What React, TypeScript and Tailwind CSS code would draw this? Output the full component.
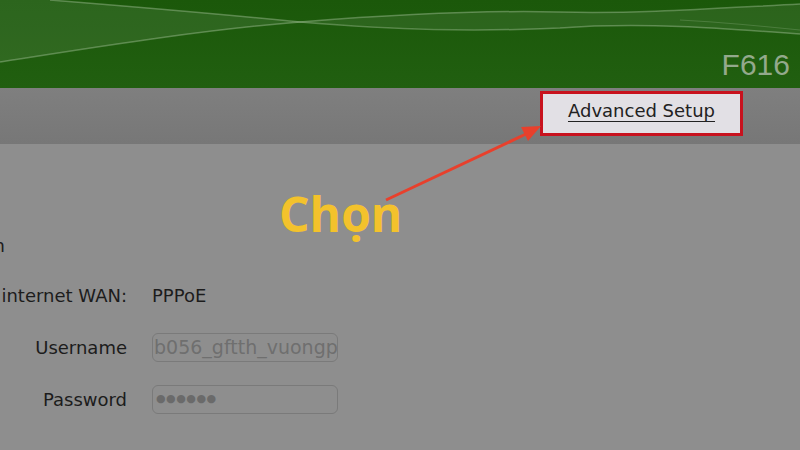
import React from 'react';

const Waves = () => (
  <svg className="absolute inset-0 h-full w-full" viewBox="0 0 800 88" preserveAspectRatio="none">
    <defs>
      <linearGradient id="g" x1="0" y1="0" x2="0" y2="1">
        <stop offset="0" stopColor="#1b580a" />
        <stop offset="1" stopColor="#215f10" />
      </linearGradient>
    </defs>
    <rect width="800" height="88" fill="url(#g)" />
    <path d="M0 0 L50 0 C150 8 240 16 300 22 C200 30 90 48 0 62 Z" fill="#ffffff" opacity="0.08" />
    <path d="M300 22 C400 14 480 10 560 12 C640 14 720 8 800 4 L800 34 C720 28 640 22 560 28 C480 32 400 28 300 22 Z" fill="#ffffff" opacity="0.07" />
    <path d="M50 0 C150 8 240 16 300 22 C400 30 470 32 560 28 C640 22 720 28 800 34" fill="none" stroke="#c8dcc0" strokeOpacity="0.35" strokeWidth="1.5" />
    <path d="M0 62 C90 48 200 30 300 22 C400 14 480 10 560 12 C640 14 720 8 800 4" fill="none" stroke="#c8dcc0" strokeOpacity="0.35" strokeWidth="1.5" />
    <path d="M680 20 C720 22 760 26 800 30" fill="none" stroke="#c8dcc0" strokeOpacity="0.2" strokeWidth="1" />
  </svg>
);

const Row = ({ label, children }: { label: string; children: React.ReactNode }) => (
  <div className="flex items-center">
    <div className="flex w-[127px] shrink-0 justify-end whitespace-nowrap">{label}</div>
    <div className="ml-[25px]">{children}</div>
  </div>
);

export default function App() {
  return (
    <div className="relative h-[450px] w-[800px] overflow-hidden bg-[#8e8e8e] font-['DejaVu_Sans',sans-serif] text-[#1c1c1c]">
      <header className="relative flex h-[88px] items-end justify-end pb-[8px] pr-[10px]">
        <Waves />
        <span className="relative font-['Liberation_Sans',sans-serif] text-[30px] leading-none text-[#93a98c]">F616</span>
      </header>

      <nav className="flex h-[56px] items-start justify-end bg-gradient-to-b from-[#7f7f7f] to-[#777777] pr-[57px] pt-[3px]">
        <div className="flex h-[45px] w-[203px] items-center justify-center border-[3px] border-[#c8121e] bg-[#e2e0e5] pb-[6px]">
          <span className="text-[18px] leading-none text-[#222] underline underline-offset-[4px]">Advanced Setup</span>
        </div>
      </nav>

      <main className="flex flex-col pt-[88px] text-[18px]">
        <div className="flex h-[22px] w-[5px] justify-end whitespace-nowrap">Cài đặt cơ bản</div>
        <div className="mt-[27px] flex flex-col gap-[23px]">
          <Row label="Kiểu kết nối internet WAN:">
            <span className="h-[29px] leading-[29px]">PPPoE</span>
          </Row>
          <Row label="Username">
            <div className="flex h-[29px] w-[186px] items-center overflow-hidden whitespace-nowrap rounded-[6px] border border-[#7a7a7a] pl-[1px] text-[19px] text-[#6f6f6f]">
              b056_gftth_vuongpt
            </div>
          </Row>
          <Row label="Password">
            <div className="flex h-[29px] w-[186px] items-center rounded-[6px] border border-[#7a7a7a] pl-[3px] text-[11px] tracking-[0.5px] text-[#6a6a6a]">
              ●●●●●●
            </div>
          </Row>
        </div>
      </main>

      <svg className="absolute left-0 top-0 h-[450px] w-[800px]" viewBox="0 0 800 450">
        <line x1="386" y1="200" x2="526" y2="134" stroke="#e8402c" strokeWidth="3" />
        <polygon points="541,126 521,127 528,141" fill="#e8402c" />
      </svg>
      <span className="absolute left-[279px] top-[190px] font-['Open_Sans',sans-serif] text-[48px] font-bold leading-none text-[#f3c22c]">
        Chọn
      </span>
    </div>
  );
}
